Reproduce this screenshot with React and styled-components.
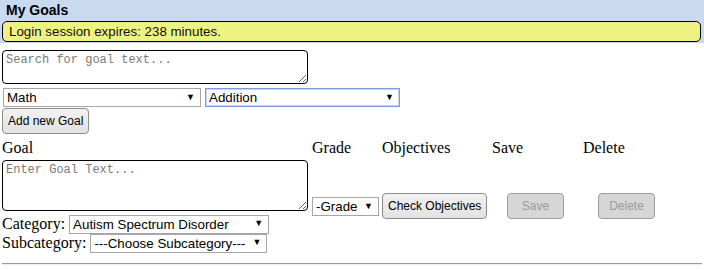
import React from "react";
import styled, { createGlobalStyle } from "styled-components";

const SANS = `"Liberation Sans", Arial, sans-serif`;
const SERIF = `"Liberation Serif", "Times New Roman", serif`;
const MONO = `"Liberation Mono", "Courier New", monospace`;

const GlobalStyle = createGlobalStyle`
  body {
    margin: 0;
    background: #fff;
    font-family: ${SERIF};
    font-size: 16px;
    color: #000;
  }
`;

const Select = ({ value, options = [], width, focused }) => (
  <SelectBox $width={width}>
    <NativeSelect defaultValue={value} $focused={focused}>
      {[value, ...options].map((o) => (
        <option key={o}>{o}</option>
      ))}
    </NativeSelect>
    <Arrow>▼</Arrow>
  </SelectBox>
);

const App = () => (
  <>
    <GlobalStyle />
    <Header>
      <Title>My Goals</Title>
      <Notice>Login session expires: 238 minutes.</Notice>
    </Header>

    <Main>
      <SearchArea placeholder="Search for goal text..." />

      <FilterRow>
        <Select value="Math" width={198} />
        <Select value="Addition" width={195} focused />
      </FilterRow>

      <Button>Add new Goal</Button>

      <GoalTable>
        <HeadCell>Goal</HeadCell>
        <HeadCell>Grade</HeadCell>
        <HeadCell>Objectives</HeadCell>
        <HeadCell>Save</HeadCell>
        <HeadCell>Delete</HeadCell>

        <GoalCell>
          <GoalArea placeholder="Enter Goal Text..." />
          <FieldLine>
            Category: <Select value="Autism Spectrum Disorder" width={200} />
          </FieldLine>
          <FieldLine>
            Subcategory: <Select value="---Choose Subcategory---" width={177} />
          </FieldLine>
        </GoalCell>
        <Cell>
          <Select value="-Grade" width={67} />
        </Cell>
        <Cell>
          <Button>Check Objectives</Button>
        </Cell>
        <Cell $center $shift={4}>
          <Button disabled $wide>
            Save
          </Button>
        </Cell>
        <Cell $center>
          <Button disabled $wide>
            Delete
          </Button>
        </Cell>
      </GoalTable>

      <Rule />
    </Main>
  </>
);

const Header = styled.header`
  background: #c9d9ef;
  padding: 2px 3px 1px 2px;
`;

const Title = styled.h1`
  margin: 0 0 2px 4px;
  font-family: ${SANS};
  font-size: 14px;
  font-weight: bold;
  line-height: 17px;
`;

const Notice = styled.div`
  background: #eef283;
  border: 1px solid #000;
  border-radius: 5px;
  height: 19px;
  padding: 0 6px;
  font-family: ${SANS};
  font-size: 13.33px;
  line-height: 19px;
  color: #111;
`;

const Main = styled.main`
  display: flex;
  flex-direction: column;
  align-items: flex-start;
  padding: 7px 2px 0 2px;
`;

const TextArea = styled.textarea`
  box-sizing: border-box;
  display: block;
  width: 306px;
  margin: 0;
  padding: 2px 3px;
  border: 1px solid #000;
  border-radius: 4px;
  font-family: ${MONO};
  font-size: 12px;
  line-height: 15px;
  resize: both;
  background: #fff;

  &::placeholder {
    color: #7a7a7a;
  }
`;

const SearchArea = styled(TextArea)`
  height: 34px;
`;

const GoalArea = styled(TextArea)`
  height: 51px;
`;

const FilterRow = styled.div`
  display: flex;
  gap: 4px;
  margin: 4px 0 1px 1px;
`;

const SelectBox = styled.span`
  position: relative;
  display: inline-block;
  vertical-align: middle;
  width: ${(p) => p.$width}px;
  height: 19px;
`;

const NativeSelect = styled.select`
  appearance: none;
  box-sizing: border-box;
  width: 100%;
  height: 100%;
  margin: 0;
  padding: 0 14px 0 3px;
  border: 1px solid ${(p) => (p.$focused ? "#7a9fdc" : "#a6a6a6")};
  box-shadow: ${(p) => (p.$focused ? "inset 0 0 0 1px #c3d4f0" : "none")};
  border-radius: 0;
  background: #fff;
  font-family: ${SANS};
  font-size: 13.33px;
  line-height: 17px;
  color: #000;
  outline: none;
`;

const Arrow = styled.span`
  position: absolute;
  right: 6px;
  top: 4px;
  font-family: ${SANS};
  font-size: 9px;
  line-height: 10px;
  color: #000;
  pointer-events: none;
`;

const Button = styled.button`
  box-sizing: border-box;
  height: 26px;
  width: ${(p) => (p.$wide ? "57px" : "auto")};
  margin: 0;
  padding: 0 5px;
  border: 1px solid #8c8c8c;
  border-radius: 4px;
  background: linear-gradient(#f2f2f2, #e2e2e2);
  font-family: ${SANS};
  font-size: 12px;
  color: #000;

  &:disabled {
    background: #d6d6d6;
    border-color: #9c9c9c;
    color: #9a9a9a;
  }
`;

const GoalTable = styled.div`
  display: grid;
  grid-template-columns: 310px 70px 110px 91px 87px;
  align-items: center;
  margin-top: 4px;
`;

const HeadCell = styled.div`
  align-self: start;
  height: 21px;
  padding-top: 1px;
  font-family: ${SERIF};
  font-size: 16px;
  line-height: 18px;
`;

const Cell = styled.div`
  display: flex;
  justify-content: ${(p) => (p.$center ? "center" : "flex-start")};
  padding-right: ${(p) => p.$shift || 0}px;
`;

const GoalCell = styled.div`
  display: flex;
  flex-direction: column;
`;

const FieldLine = styled.div`
  display: flex;
  align-items: center;
  gap: 4px;
  height: 19px;
  font-family: ${SERIF};
  font-size: 16px;
  line-height: 19px;
  white-space: nowrap;
  &:first-of-type {
    margin-top: 3px;
  }
`;

const Rule = styled.hr`
  align-self: stretch;
  margin: 11px 0 0;
  border: 0;
  border-top: 1px solid #9a9a9a;
  border-bottom: 1px solid #eeeeee;
`;

export default App;
